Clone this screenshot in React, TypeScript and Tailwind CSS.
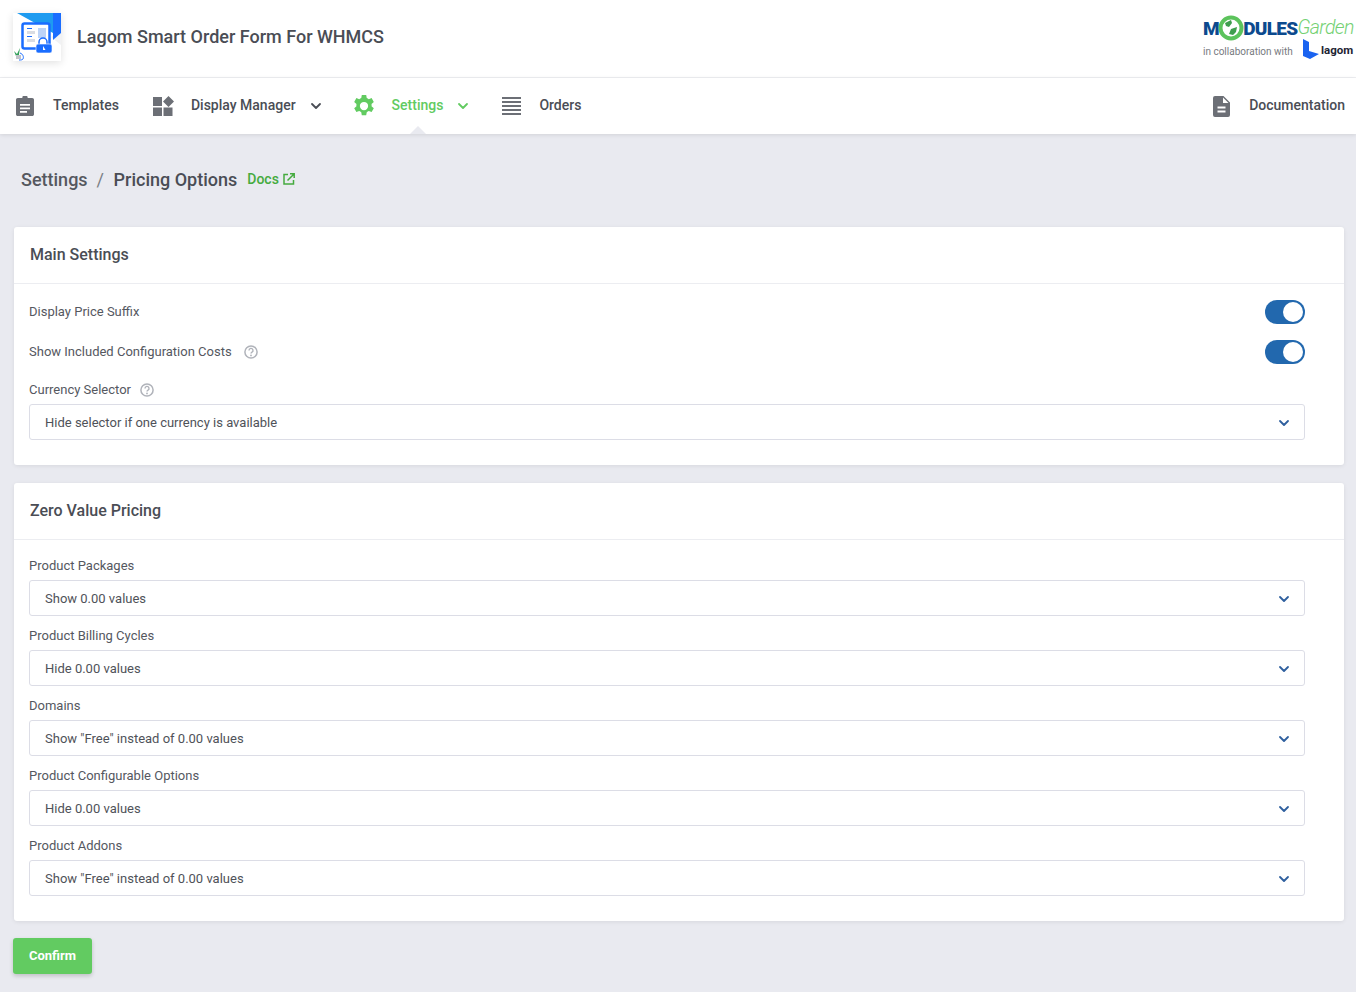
import { ChevronDown } from "lucide-react";

const font = { fontFamily: "Roboto, sans-serif" };

function ClipboardIcon() {
  return (
    <svg width="18" height="20" viewBox="0 0 18 20" className="shrink-0 -ml-[2px]">
      <path
        fill="#6c6f76"
        fillRule="evenodd"
        d="M6.300 2a2.700 2.700 0 0 1 5.400 0H16.200c1 0 1.800.8 1.800 1.800v14.400c0 1-.8 1.800-1.800 1.800H1.800C.8 20 0 19.200 0 18.200V3.800C0 2.800.8 2 1.800 2h4.500zM4 8v1.700h10V8H4zm0 3.500v1.700h10v-1.700H4zM4 15v1.700h7V15H4z"
      />
    </svg>
  );
}

function WidgetsIcon() {
  return (
    <svg width="21" height="20" viewBox="0 0 21 20" className="shrink-0">
      <path fill="#6c6f76" d="M0 1h9v9H0zM0 11.500h9V20.500H0zM10.500 11.500h9V20.500h-9zM15.500 0l5.500 5.500-5.500 5.500-5.500-5.500z" />
    </svg>
  );
}

function GearIcon() {
  return (
    <svg width="22" height="22" viewBox="0 0 24 24" className="shrink-0 -ml-[1px]">
      <path
        fill="#62cb61"
        fillRule="evenodd"
        d="M9.600 0h4.800l.6 3.300c.8.300 1.500.7 2.200 1.200l3.100-1.100 2.400 4.200-2.500 2.100c.2.800.2 1.800 0 2.600l2.500 2.100-2.400 4.200-3.100-1.100c-.7.500-1.400.9-2.200 1.200l-.6 3.300H9.600L9 18.700c-.8-.3-1.500-.7-2.200-1.200l-3.100 1.100-2.400-4.200 2.500-2.100c-.2-.8-.2-1.800 0-2.600L1.300 7.600l2.400-4.200 3.100 1.100c.7-.5 1.400-.9 2.200-1.200L9.600 0zM12 7.500a4.500 4.500 0 1 0 0 9 4.500 4.500 0 0 0 0-9z"
      />
    </svg>
  );
}

function ListIcon() {
  return (
    <svg width="19" height="18" viewBox="0 0 19 18" className="shrink-0">
      <path fill="#6c6f76" d="M0 0h19v2H0zM0 4h19v2H0zM0 8h19v2H0zM0 12h19v2H0zM0 16h19v2H0z" />
    </svg>
  );
}

function FileIcon() {
  return (
    <svg width="17" height="21" viewBox="0 0 17 21" className="shrink-0">
      <path
        fill="#6c6f76"
        fillRule="evenodd"
        d="M2 0h8.500L17 6.500V19a2 2 0 0 1-2 2H2a2 2 0 0 1-2-2V2a2 2 0 0 1 2-2zm2.500 10.500v2h8v-2h-8zm0 4v2h8v-2h-8zM10 1.500V7h5.500L10 1.500z"
      />
    </svg>
  );
}

function HelpIcon() {
  return (
    <svg width="14" height="14" viewBox="0 0 14 14" className="shrink-0" fill="none">
      <circle cx="7" cy="7" r="6.100" stroke="#b0b3ba" strokeWidth="1.500" />
      <path d="M5 5.400a2 2 0 1 1 3 1.700c-.7.400-1 .8-1 1.500" stroke="#b0b3ba" strokeWidth="1.400" />
      <circle cx="7" cy="10.400" r=".9" fill="#b0b3ba" />
    </svg>
  );
}

function DocsIcon() {
  return (
    <svg width="12" height="12" viewBox="0 0 12 12" className="shrink-0 ml-[4px]" fill="none">
      <path d="M5 1.500H1v9.500h9.500V7" stroke="#45ab3f" strokeWidth="1.500" />
      <path d="M4.500 7.500L10.500 1.500M7 .8h4.200V5" stroke="#45ab3f" strokeWidth="1.500" />
    </svg>
  );
}

function AppLogo() {
  return (
    <div className="w-[48px] h-[48px] shadow-[0_2px_8px_rgba(0,0,0,0.12)] bg-white shrink-0">
      <svg width="48" height="48" viewBox="0 0 48 48">
        <path fill="#f1f2f4" d="M38 24l10-6v14z" />
        <path fill="#1e9bf0" d="M4 0h36v20z" />
        <path fill="#1a6dff" d="M40 0h8v20l-8 7z" />
        <rect x="9.500" y="10.500" width="27" height="25" rx="2" fill="#fff" stroke="#1a6dff" strokeWidth="2.500" />
        <rect x="25" y="15" width="8" height="10" fill="#bcd3f7" />
        <rect x="26" y="26" width="6" height="1" fill="#1a6dff" />
        <rect x="14" y="15" width="5" height="1" fill="#1a6dff" />
        <rect x="14" y="18" width="8" height="3" fill="#d9dce2" />
        <rect x="14" y="23" width="5" height="1" fill="#1a6dff" />
        <rect x="14" y="26" width="8" height="3" fill="#d9dce2" />
        <path d="M26 31v-2a4 4 0 0 1 8 0v2" fill="#fff" stroke="#1a6dff" strokeWidth="1.500" />
        <rect x="23" y="31" width="16" height="9" rx="2" fill="#1a6dff" stroke="#fff" strokeWidth=".6" />
        <path d="M30 33l2.500 4h-2.500z" fill="#fff" />
        <path fill="#2f9e57" d="M1 38l3 3 3-6-1 6 0 2H3z" />
        <rect x="3" y="42" width="5" height="4" fill="#bfc2c8" />
        <path d="M7 40c3 1 4 4 3 6-1 1-2 1-4 1" fill="none" stroke="#1a6dff" strokeWidth="1" />
      </svg>
    </div>
  );
}

function BrandLogo() {
  return (
    <div className="flex flex-col items-start w-[151px] mt-[2px]">
      <div className="flex items-center h-[26px] leading-none">
        <span className="text-[19px] font-black text-[#0c4a8e] tracking-[-0.5px]">M</span>
        <svg width="26" height="26" viewBox="0 0 26 26" className="shrink-0 -mx-[1px]">
          <circle cx="13" cy="13" r="10.500" fill="#fff" stroke="#5cc35c" strokeWidth="4" />
          <path fill="#3f9e4e" d="M7 8l6-3 1 3-3 4-3-1zM11 19l2-5 6-2-1 5-3 3z" />
        </svg>
        <span className="text-[19px] font-black text-[#0c4a8e] tracking-[-0.7px]">DULES</span>
        <span className="text-[19.500px] font-light italic text-[#74d173] tracking-[-0.6px]">Garden</span>
      </div>
      <div className="flex items-center mt-[1px] h-[18px]">
        <span className="text-[10px] text-[#777a80] w-[100px]">in collaboration with</span>
        <svg width="16" height="20" viewBox="0 0 16 20" className="shrink-0 -mt-[4px]">
          <path fill="#1a63f0" d="M0 0l6 3v9l10 3-9 5-7-3z" />
        </svg>
        <span className="ml-[2px] text-[11.500px] font-bold text-[#1d2433]">lagom</span>
      </div>
    </div>
  );
}

function NavItem({
  icon,
  label,
  active,
  caret,
  gap,
}: {
  icon: React.ReactNode;
  label: string;
  active?: boolean;
  caret?: boolean;
  gap: string;
}) {
  return (
    <div className={`flex items-center ${gap}`}>
      <div className="w-[21px] flex justify-center">{icon}</div>
      <span className={`text-[14px] font-medium mb-[2px] ml-[17px] ${active ? "text-[#62cb61]" : "text-[#4a4d55]"}`}>
        {label}
      </span>
      {caret && (
        <ChevronDown
          size={16}
          strokeWidth={2.750}
          className={`ml-[12px] -mr-[1px] ${active ? "text-[#62cb61]" : "text-[#4a4d55]"}`}
        />
      )}
    </div>
  );
}

function Label({ text, help, className }: { text: string; help?: boolean; className?: string }) {
  return (
    <div className={`flex items-center text-[13px] leading-[20px] text-[#55585f] ${className ?? ""}`}>
      {text}
      {help && (
        <span className={text.startsWith("Show") ? "ml-[12px]" : "ml-[9px]"}>
          <HelpIcon />
        </span>
      )}
    </div>
  );
}

function Toggle() {
  return (
    <div className="w-[40px] h-[24px] rounded-full bg-[#2268ae] flex items-center justify-end pr-[2px]">
      <div className="w-[20px] h-[20px] rounded-full bg-white" />
    </div>
  );
}

function Select({ value }: { value: string }) {
  return (
    <div className="w-[1276px] h-[36px] border border-[#dcdde6] rounded-[3px] bg-white flex items-center justify-between pl-[15px] pr-[12px]">
      <span className="text-[13px] text-[#4f5259] pt-[2px]">{value}</span>
      <ChevronDown size={16} strokeWidth={2.750} className="text-[#2f5f9e] mt-[2px]" />
    </div>
  );
}

function SelectField({ label, value }: { label: string; value: string }) {
  return (
    <div className="flex flex-col gap-[4px] mb-[10px]">
      <Label text={label} />
      <Select value={value} />
    </div>
  );
}

function Card({ title, children, className }: { title: string; children: React.ReactNode; className?: string }) {
  return (
    <section className={`w-[1330px] ml-[14px] bg-white rounded-[3px] shadow-[0_1px_4px_rgba(0,0,0,0.08)] ${className ?? ""}`}>
      <div className="h-[57px] border-b border-[#ecedf1] pl-[16px] flex items-center text-[16px] font-medium text-[#4a4d55]">
        {title}
      </div>
      {children}
    </section>
  );
}

export default function App() {
  return (
    <div style={font} className="min-h-[992px] bg-[#e9eaf0] overflow-hidden">
      <header className="h-[78px] bg-white border-b border-[#eeeff2] flex items-center justify-between pl-[13px] pr-[2px] pb-[4px]">
        <div className="flex items-center gap-[16px]">
          <AppLogo />
          <h1 className="text-[18px] font-medium text-[#4a4d55]">Lagom Smart Order Form For WHMCS</h1>
        </div>
        <BrandLogo />
      </header>

      <nav className="relative h-[56px] bg-white shadow-[0_1px_4px_rgba(0,0,0,0.1)] flex items-center justify-between pl-[15px] pr-[11px]">
        <div className="flex items-center">
          <NavItem icon={<ClipboardIcon />} label="Templates" gap="mr-[34px]" />
          <NavItem icon={<WidgetsIcon />} label="Display Manager" caret gap="mr-[31px]" />
          <NavItem icon={<GearIcon />} label="Settings" active caret gap="mr-[31px]" />
          <NavItem icon={<ListIcon />} label="Orders" gap="" />
        </div>
        <NavItem icon={<FileIcon />} label="Documentation" gap="" />
        <div className="absolute left-[410px] bottom-0 w-0 h-0 border-x-[8px] border-x-transparent border-b-[8px] border-b-[#e9eaf0]" />
      </nav>

      <div className="h-[93px] pb-[3px] pl-[21px] flex items-center">
        <span className="text-[18px] font-medium text-[#55585f]">Settings</span>
        <span className="text-[18px] text-[#7b7e85] ml-[9px]">/</span>
        <span className="text-[18px] font-medium text-[#4a4d55] ml-[9.500px]">Pricing Options</span>
        <span className="text-[14px] font-medium text-[#45ab3f] ml-[10px]">Docs</span>
        <DocsIcon />
      </div>

      <Card title="Main Settings" className="h-[238px]">
        <div className="pl-[15px] pr-[39px] pt-[16px]">
          <div className="flex items-center justify-between h-[24px]">
            <Label text="Display Price Suffix" />
            <Toggle />
          </div>
          <div className="flex items-center justify-between h-[24px] mt-[16px]">
            <Label text="Show Included Configuration Costs" help />
            <Toggle />
          </div>
          <Label text="Currency Selector" help className="mt-[16px] mb-[4px]" />
          <Select value="Hide selector if one currency is available" />
        </div>
      </Card>

      <Card title="Zero Value Pricing" className="h-[438px] mt-[18px]">
        <div className="pl-[15px] pt-[16px]">
          <SelectField label="Product Packages" value="Show 0.00 values" />
          <SelectField label="Product Billing Cycles" value="Hide 0.00 values" />
          <SelectField label="Domains" value={'Show "Free" instead of 0.00 values'} />
          <SelectField label="Product Configurable Options" value="Hide 0.00 values" />
          <SelectField label="Product Addons" value={'Show "Free" instead of 0.00 values'} />
        </div>
      </Card>

      <button className="ml-[13px] mt-[17px] w-[79px] h-[36px] rounded-[3px] bg-[#62cb61] text-white text-[13px] font-bold shadow-[0_2px_4px_rgba(0,0,0,0.18)]">
        Confirm
      </button>
    </div>
  );
}
